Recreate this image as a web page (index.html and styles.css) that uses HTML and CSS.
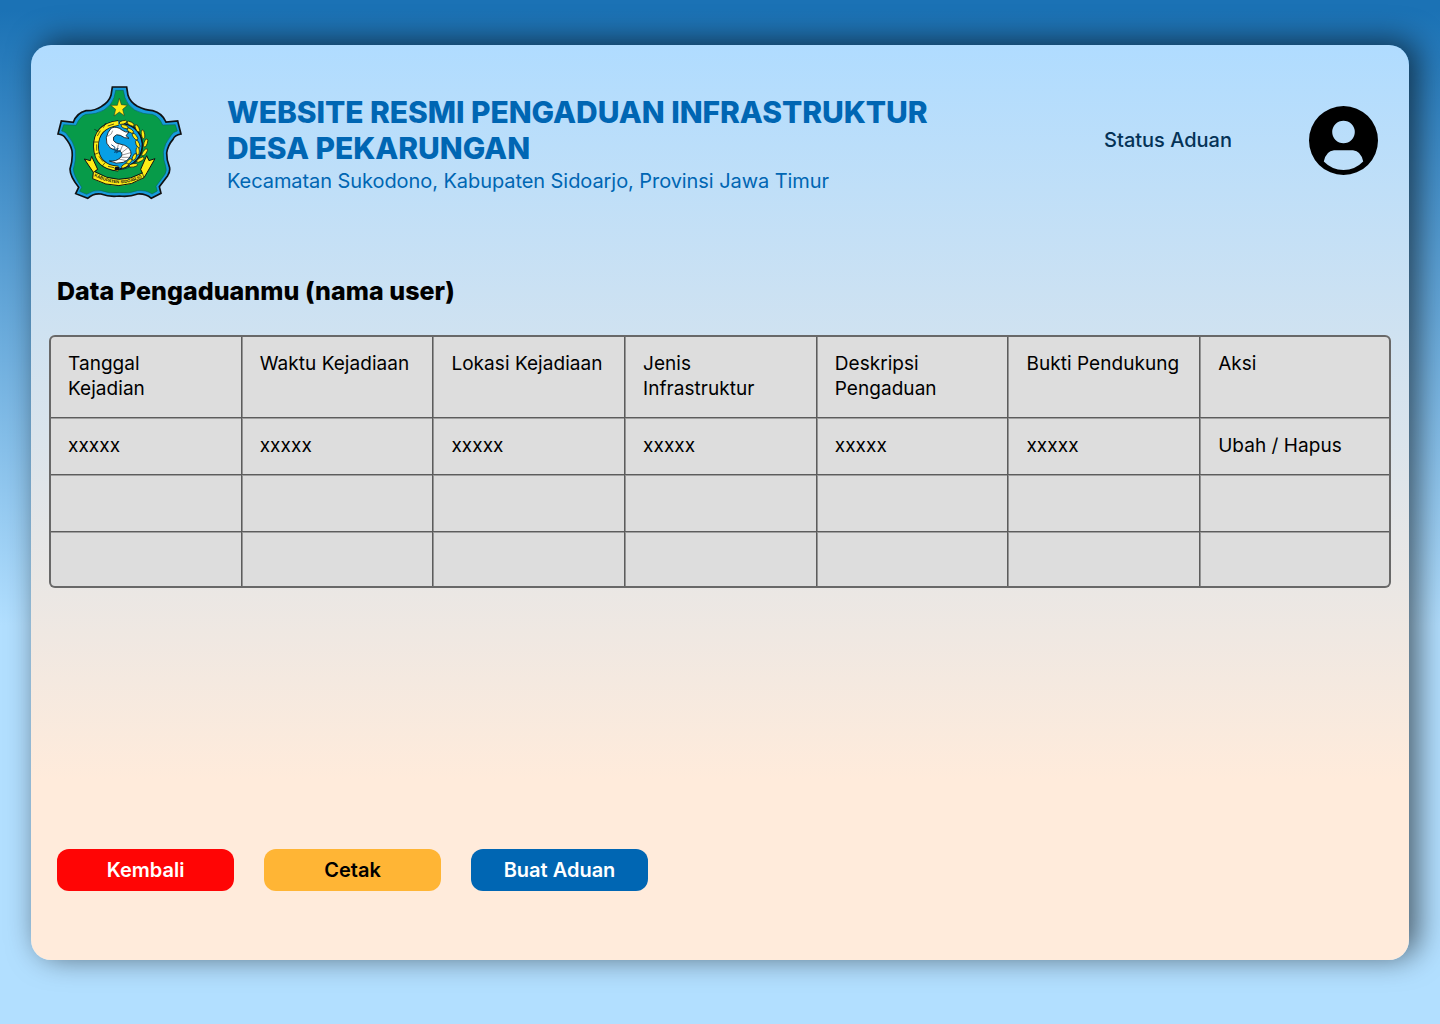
FILE: index.html
```html
<!DOCTYPE html>
<html lang="id">
<head>
<meta charset="utf-8">
<title>Website Resmi Pengaduan Infrastruktur Desa Pekarungan</title>
<link rel="stylesheet" href="styles.css">
</head>
<body>
<main class="card">
  <header class="header">
    <svg class="logo" viewBox="21 17 378 342" role="img" aria-label="Kabupaten Sidoarjo">
      <path class="crest-edge" d="M187 20H230L234 45Q240 65 262 78Q286 90 308 91Q336 98 348 125L383 122L393 161Q374 164 369 177Q353 195 350 218Q350 239 357 256Q363 270 353 286L328 319L333 339L304 354Q286 339 263 341Q236 351 208 347Q180 351 153 341Q130 338 113 354L77 340L86 321Q60 288 60 266Q69 238 66 211Q61 190 46 173Q41 163 24 161L34 122L70 126Q80 98 108 91Q134 92 155 78Q177 65 183 45Z"/>
      <path class="crest-green" d="M197 30H220L225 52Q231 73 254 89Q281 103 307 102Q328 109 338 134L376 133L382 152Q370 154 364 164Q343 190 340 215Q340 239 347 258Q352 271 344 283L318 318L322 332L306 341Q289 329 263 331Q236 341 208 337Q180 341 153 331Q130 328 110 342L89 333L95 321Q71 286 70 267Q79 239 76 209Q70 184 53 165Q48 154 35 152L41 133L78 135Q89 109 107 102Q137 103 162 89Q186 73 192 52Z"/>
      <path class="star" d="M208 54L214 73L232 75L218 87L223 106L208 95L192 107L197 87L182 75H202Z"/>
      <circle class="disc" cx="205" cy="195" r="73"/>
      <path class="rope-edge" d="M205 128Q137 137 138 200Q140 260 205 265"/>
      <path class="rope" d="M205 128Q137 137 138 200Q140 260 205 265"/>
      <path class="rope-cuts" d="M167 128L160 142M145 153L133 147M145 185H131M147 217L134 222M166 246L157 257"/>
      <path class="rope-cuts" d="M192 131L173 137M151 151L142 167M140 192V211M147 228L159 244M174 258L192 262"/>
      <path class="stem" d="M207 128Q270 132 277 190Q277 249 210 266"/>
      <g class="leaves">
        <ellipse cx="219" cy="126" rx="12" ry="5" transform="rotate(-15 219 126)"/>
        <ellipse cx="224" cy="139" rx="11" ry="5" transform="rotate(20 224 139)"/>
        <ellipse cx="242" cy="130" rx="12" ry="5" transform="rotate(28 242 130)"/>
        <ellipse cx="241" cy="151" rx="11" ry="5" transform="rotate(35 241 151)"/>
        <ellipse cx="262" cy="144" rx="12" ry="5" transform="rotate(65 262 144)"/>
        <ellipse cx="255" cy="169" rx="12" ry="5" transform="rotate(52 255 169)"/>
        <ellipse cx="279" cy="162" rx="13" ry="5" transform="rotate(83 279 162)"/>
        <ellipse cx="263" cy="191" rx="12" ry="5" transform="rotate(68 263 191)"/>
        <ellipse cx="287" cy="188" rx="13" ry="5" transform="rotate(108 287 188)"/>
        <ellipse cx="263" cy="212" rx="12" ry="5" transform="rotate(88 263 212)"/>
        <ellipse cx="284" cy="216" rx="13" ry="5" transform="rotate(125 284 216)"/>
        <ellipse cx="253" cy="230" rx="11" ry="5" transform="rotate(115 253 230)"/>
        <ellipse cx="271" cy="238" rx="13" ry="5" transform="rotate(150 271 238)"/>
        <ellipse cx="237" cy="244" rx="11" ry="5" transform="rotate(135 237 244)"/>
        <ellipse cx="250" cy="255" rx="13" ry="5" transform="rotate(170 250 255)"/>
        <ellipse cx="225" cy="256" rx="12" ry="5" transform="rotate(150 225 256)"/>
      </g>
      <rect class="ink" x="194" y="260" width="15" height="10" rx="3"/>
      <path class="fish" d="M184 143Q201 136 217 150Q226 157 237 155L228 166L237 174Q222 174 211 165Q199 159 191 170Q186 182 199 188L224 195Q244 204 243 222Q239 238 220 246Q199 253 178 242Q199 244 211 232Q221 222 211 213Q195 211 181 203Q166 190 169 172Q173 154 184 143Z"/>
      <path class="fish-lines" d="M173 168Q187 162 188 151M205 192L201 211M218 195L209 215M233 203L214 218M242 217L217 224M239 231L214 231M228 241L207 236"/>
      <path class="feelers" d="M184 193L195 201L190 208L205 205L193 216L211 211L198 218"/>
      <path class="ribbon" d="M103 236L121 241L125 228L143 267L134 274Q207 318 277 278L272 267L290 226L297 241L315 235L291 277L282 292Q208 338 128 295L130 276Z"/>
      <path class="ribbon-folds" d="M130 276L143 267M282 292L277 278"/>
      <path id="ribbon-curve" fill="none" d="M132 287Q208 330 283 288"/>
      <text class="ribbon-text"><textPath href="#ribbon-curve" textLength="151">KABUPATEN SIDOARJO</textPath></text>
    </svg>
    <div class="titles">
      <h1 class="title">WEBSITE RESMI PENGADUAN INFRASTRUKTUR<br>DESA PEKARUNGAN</h1>
      <p class="subtitle">Kecamatan Sukodono, Kabupaten Sidoarjo, Provinsi Jawa Timur</p>
    </div>
    <a class="status">Status Aduan</a>
    <svg class="avatar" viewBox="0 0 69 69" aria-label="Profil">
      <path fill-rule="evenodd" d="M34.500 0a34.500 34.500 0 1 0 0 69a34.500 34.500 0 1 0 0-69ZM34.500 14.700a11.300 11.300 0 1 1 0 22.600a11.300 11.300 0 1 1 0-22.600ZM25 44.300H44Q52 45 54.200 55.500Q46 64 34.500 64T14.800 55.500Q17 45 25 44.300Z"/>
    </svg>
  </header>
  <h2 class="heading">Data Pengaduanmu (nama user)</h2>
  <div class="table">
    <div class="cell">Tanggal<br>Kejadian</div><div class="cell">Waktu Kejadiaan</div><div class="cell">Lokasi Kejadiaan</div><div class="cell">Jenis<br>Infrastruktur</div><div class="cell">Deskripsi<br>Pengaduan</div><div class="cell">Bukti Pendukung</div><div class="cell">Aksi</div>
    <div class="cell">xxxxx</div><div class="cell">xxxxx</div><div class="cell">xxxxx</div><div class="cell">xxxxx</div><div class="cell">xxxxx</div><div class="cell">xxxxx</div><div class="cell">Ubah / Hapus</div>
    <div class="cell"></div><div class="cell"></div><div class="cell"></div><div class="cell"></div><div class="cell"></div><div class="cell"></div><div class="cell"></div>
    <div class="cell"></div><div class="cell"></div><div class="cell"></div><div class="cell"></div><div class="cell"></div><div class="cell"></div><div class="cell"></div>
  </div>
  <div class="actions">
    <button class="button back">Kembali</button>
    <button class="button print">Cetak</button>
    <button class="button create">Buat Aduan</button>
  </div>
</main>
</body>
</html>
```
FILE: styles.css
```css
* { box-sizing: border-box; }
body {
  margin: 0;
  height: 1024px;
  padding: 45px 31px 64px;
  overflow: hidden;
  font-family: Inter, sans-serif;
  background: linear-gradient(#1b72b5 0, #1b72b5 10px, #b2dfff 625px);
}
.card {
  height: 915px;
  display: flex;
  flex-direction: column;
  border-radius: 20px;
  background: linear-gradient(#b0dcff 0, #ffebdb 735px);
  box-shadow: 8px -4px 31px rgba(0, 0, 0, .6);
}
.header { display: flex; height: 190px; padding: 41px 31px 0 26px; }
.logo { width: 126px; height: 114px; flex: none; }
.titles { margin: 8px 0 0 44px; color: #0066b3; }
.title { margin: 0; font-size: 30px; line-height: 36px; font-weight: 800; letter-spacing: -.07px; white-space: nowrap; }
.subtitle { margin: 3px 0 0; font-size: 20px; line-height: 24px; letter-spacing: -.07px; white-space: nowrap; }
.status { margin: 42px 77px 0 auto; font-size: 20px; line-height: 24px; font-weight: 500; color: #043256; }
.avatar { width: 69px; height: 69px; margin-top: 20px; flex: none; }
.heading { margin: 41px 0 0 26px; font-size: 25px; line-height: 30px; font-weight: 800; letter-spacing: .04px; }
.table {
  position: relative;
  width: 1342px;
  height: 253px;
  margin: 29px 0 0 18px;
  display: grid;
  grid-template-columns: repeat(6, 191.700px) 1fr;
  grid-template-rows: 82px 57px 57px 1fr;
  border-radius: 6px;
  background: #ddd;
}
/* Frame drawn over the ends of the cell rules */
.table::after {
  content: "";
  position: absolute;
  inset: 0;
  border-radius: 6px;
  box-shadow: inset 0 0 0 2px #686868;
}
.cell {
  --top: #5c5c5c;
  --top-soft: #a0a0a0;
  --left: #5c5c5c;
  --left-soft: #949494;
  padding: 16px 0 0 19px;
  box-shadow: inset 1px 0 var(--left), inset 0 1px var(--top), inset 2px 0 var(--left-soft), inset 0 2px var(--top-soft);
  font-size: 19px;
  line-height: 25px;
  letter-spacing: .05px;
  white-space: nowrap;
}
.cell:nth-child(-n+7) { --top: transparent; --top-soft: transparent; }
.cell:nth-child(7n+1) { --left: transparent; --left-soft: transparent; }
.actions { display: flex; gap: 30px; margin: 261px 0 0 26px; }
.button { width: 177px; height: 42px; padding: 0; border: 0; border-radius: 12px; font: 600 20px/24px Inter, sans-serif; color: #fff; }
.back { background: #ff0505; }
.print { background: #ffb535; color: #000; }
.create { background: #0066b3; }

.crest-edge { fill: #179bdc; stroke: #111; stroke-width: 5; }
.crest-green { fill: #079b49; stroke: #0b5a58; stroke-width: 1.500; }
.star { fill: #ffed16; stroke: #222; stroke-width: 1.500; }
.disc { fill: #079fe5; stroke: #111; stroke-width: 2; }
.rope-edge { fill: none; stroke: #111; stroke-width: 17; }
.rope { fill: none; stroke: #ffed16; stroke-width: 12; }
.rope-cuts { stroke: #111; stroke-width: 2; fill: none; }
.stem { fill: none; stroke: #111; stroke-width: 4; }
.leaves { fill: #ffed16; stroke: #111; stroke-width: 2; }
.ink { fill: #111; }
.fish { fill: #fff; stroke: #111; stroke-width: 2.500; }
.fish-lines { fill: none; stroke: #333; stroke-width: 1.500; }
.feelers { fill: none; stroke: #074b78; stroke-width: 3; }
.ribbon { fill: #ffed16; stroke: #111; stroke-width: 3; }
.ribbon-folds { stroke: #111; stroke-width: 2; }
.ribbon-text { font: 700 13px "Liberation Sans", sans-serif; fill: #111; }
```
